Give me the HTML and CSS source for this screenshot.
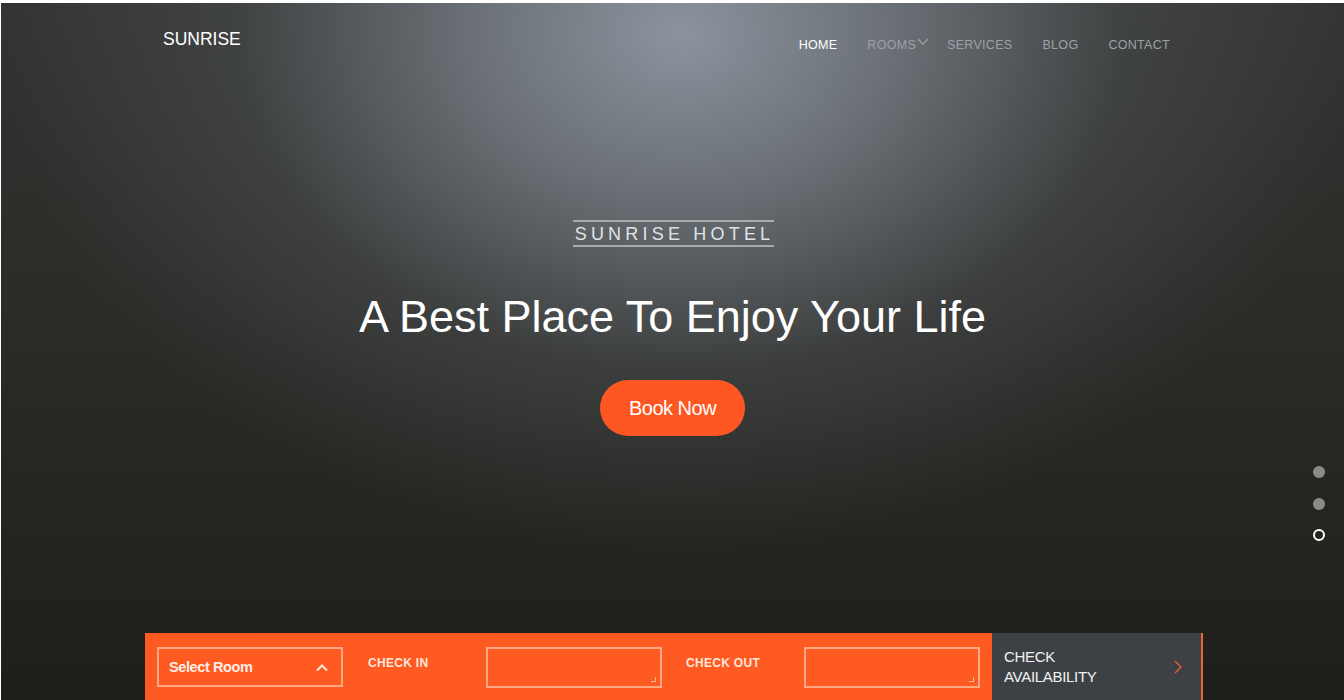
FILE: index.html
```html
<!DOCTYPE html>
<html lang="en">
<head>
<meta charset="utf-8">
<title>Sunrise Hotel</title>
<link rel="stylesheet" href="styles.css">
</head>
<body>
<div class="page">
  <header class="topbar">
    <div class="logo">SUNRISE</div>
    <nav class="nav">
      <a class="nav-link active" href="#">HOME</a>
      <a class="nav-link drop" href="#">ROOMS<svg class="caret" width="12" height="8" viewBox="0 0 12 8"><path d="M1 1l5 5 5-5" fill="none" stroke="#9a9ea3" stroke-width="1.4"/></svg></a>
      <a class="nav-link" href="#">SERVICES</a>
      <a class="nav-link" href="#">BLOG</a>
      <a class="nav-link" href="#">CONTACT</a>
    </nav>
  </header>

  <section class="hero">
    <div class="kicker">SUNRISE HOTEL</div>
    <h1 class="title">A Best Place To Enjoy Your Life</h1>
    <a class="btn" href="#">Book Now</a>
  </section>

  <div class="dots">
    <span class="dot"></span>
    <span class="dot"></span>
    <span class="dot current"></span>
  </div>

  <form class="booking">
    <div class="orange">
      <div class="select">
        <span>Select Room</span>
        <svg width="14" height="9" viewBox="0 0 14 9"><path d="M2 7.5l5-5 5 5" fill="none" stroke="#ffe6d9" stroke-width="2"/></svg>
      </div>
      <label class="lbl">CHECK IN</label>
      <div class="field"></div>
      <label class="lbl lbl-out">CHECK OUT</label>
      <div class="field"></div>
    </div>
    <div class="avail">
      <span class="avail-text">CHECK<br>AVAILABILITY</span>
      <svg width="10" height="16" viewBox="0 0 10 16"><path d="M2 2l6 6-6 6" fill="none" stroke="#e0593a" stroke-width="1.5"/></svg>
    </div>
  </form>
</div>
</body>
</html>
```
FILE: styles.css
```css
* { box-sizing: border-box; }
html, body { margin: 0; padding: 0; }
body {
  font-family: "Liberation Sans", Arial, sans-serif;
  background: #fff;
  overflow: hidden;
}
.page {
  position: relative;
  height: 697px;
  margin-top: 3px;
  margin-left: 1px;
  display: flex;
  flex-direction: column;
  background:
    radial-gradient(ellipse 680px 520px at 680px 30px, rgba(140,147,157,1) 0%, rgba(118,124,132,0.85) 30%, rgba(78,82,84,0.5) 65%, rgba(40,40,38,0) 100%),
    linear-gradient(180deg, #333432 0%, #2b2b28 45%, #1f1e1a 100%);
}
.topbar {
  display: flex;
  align-items: flex-start;
  padding: 26px 0 0 162px;
  height: 80px;
}
.logo {
  color: #fff;
  font-size: 17.5px;
  letter-spacing: 0;
}
.nav {
  display: flex;
  margin-left: auto;
  margin-right: 174px;
  padding-top: 9px;
}
.nav-link {
  color: #9da1a6;
  text-decoration: none;
  font-size: 12.5px;
  letter-spacing: 0.3px;
  margin-left: 30px;
  display: flex;
  align-items: flex-start;
}
.nav-link.active { color: #fff; }
.nav-link.drop { margin-right: -12px; }
.caret { margin-left: 1px; margin-top: 0px; }
.hero {
  display: flex;
  flex-direction: column;
  align-items: center;
  padding-top: 137px;
}
.kicker {
  color: #dfe3e6;
  font-size: 18px;
  letter-spacing: 4.2px;
  padding: 2px 0 1px 2px;
  border-top: 2px solid #a6abb0;
  border-bottom: 2px solid #a6abb0;
  line-height: 20px;
  margin-left: 2px;
}
.title {
  color: #fff;
  font-weight: normal;
  font-size: 45px;
  margin: 44px 0 0 0;
  line-height: 52px;
  letter-spacing: 0;
}
.btn {
  margin-top: 37px;
  background: #ff5722;
  color: #fff;
  text-decoration: none;
  font-size: 20px;
  letter-spacing: -0.5px;
  width: 145px;
  height: 56px;
  border-radius: 28px;
  display: flex;
  align-items: center;
  justify-content: center;
}
.dots {
  position: absolute;
  right: 19px;
  top: 463px;
  display: flex;
  flex-direction: column;
  gap: 19.5px;
}
.dot {
  width: 12px;
  height: 12px;
  border-radius: 50%;
  background: #8b8b89;
}
.dot.current {
  background: transparent;
  border: 2px solid #fff;
}
.booking {
  margin: auto 0 0 144px;
  width: 1058px;
  height: 67px;
  display: flex;
}
.orange {
  background: #ff5a22;
  flex: 0 0 847px;
  display: flex;
  align-items: flex-start;
  padding: 14px 0 0 12px;
}
.select {
  width: 186px;
  height: 40px;
  border: 2px solid #ffa884;
  display: flex;
  align-items: center;
  justify-content: space-between;
  padding: 0 12px 0 10px;
  color: #ffeee6;
  font-weight: bold;
  font-size: 14.5px;
  letter-spacing: -0.4px;
}
.lbl {
  color: #ffe6da;
  font-weight: bold;
  font-size: 12px;
  letter-spacing: 0.3px;
  margin: 9px 0 0 25px;
  width: 118px;
}
.lbl-out { margin-left: 24px; }
.field {
  position: relative;
  width: 176px;
  height: 41px;
  border: 2px solid #ffa884;
}
.field::after {
  content: "";
  position: absolute;
  right: 4px;
  bottom: 4px;
  width: 4px;
  height: 4px;
  border-right: 1px solid #ffb595;
  border-bottom: 1px solid #ffb595;
}
.avail {
  flex: 1;
  background: #3d4145;
  border-right: 2px solid #e8662e;
  display: flex;
  align-items: center;
  justify-content: space-between;
  padding: 0 18px 0 12px;
}
.avail-text {
  color: #f2f2f2;
  font-size: 15px;
  line-height: 20px;
  letter-spacing: -0.3px;
}
```
